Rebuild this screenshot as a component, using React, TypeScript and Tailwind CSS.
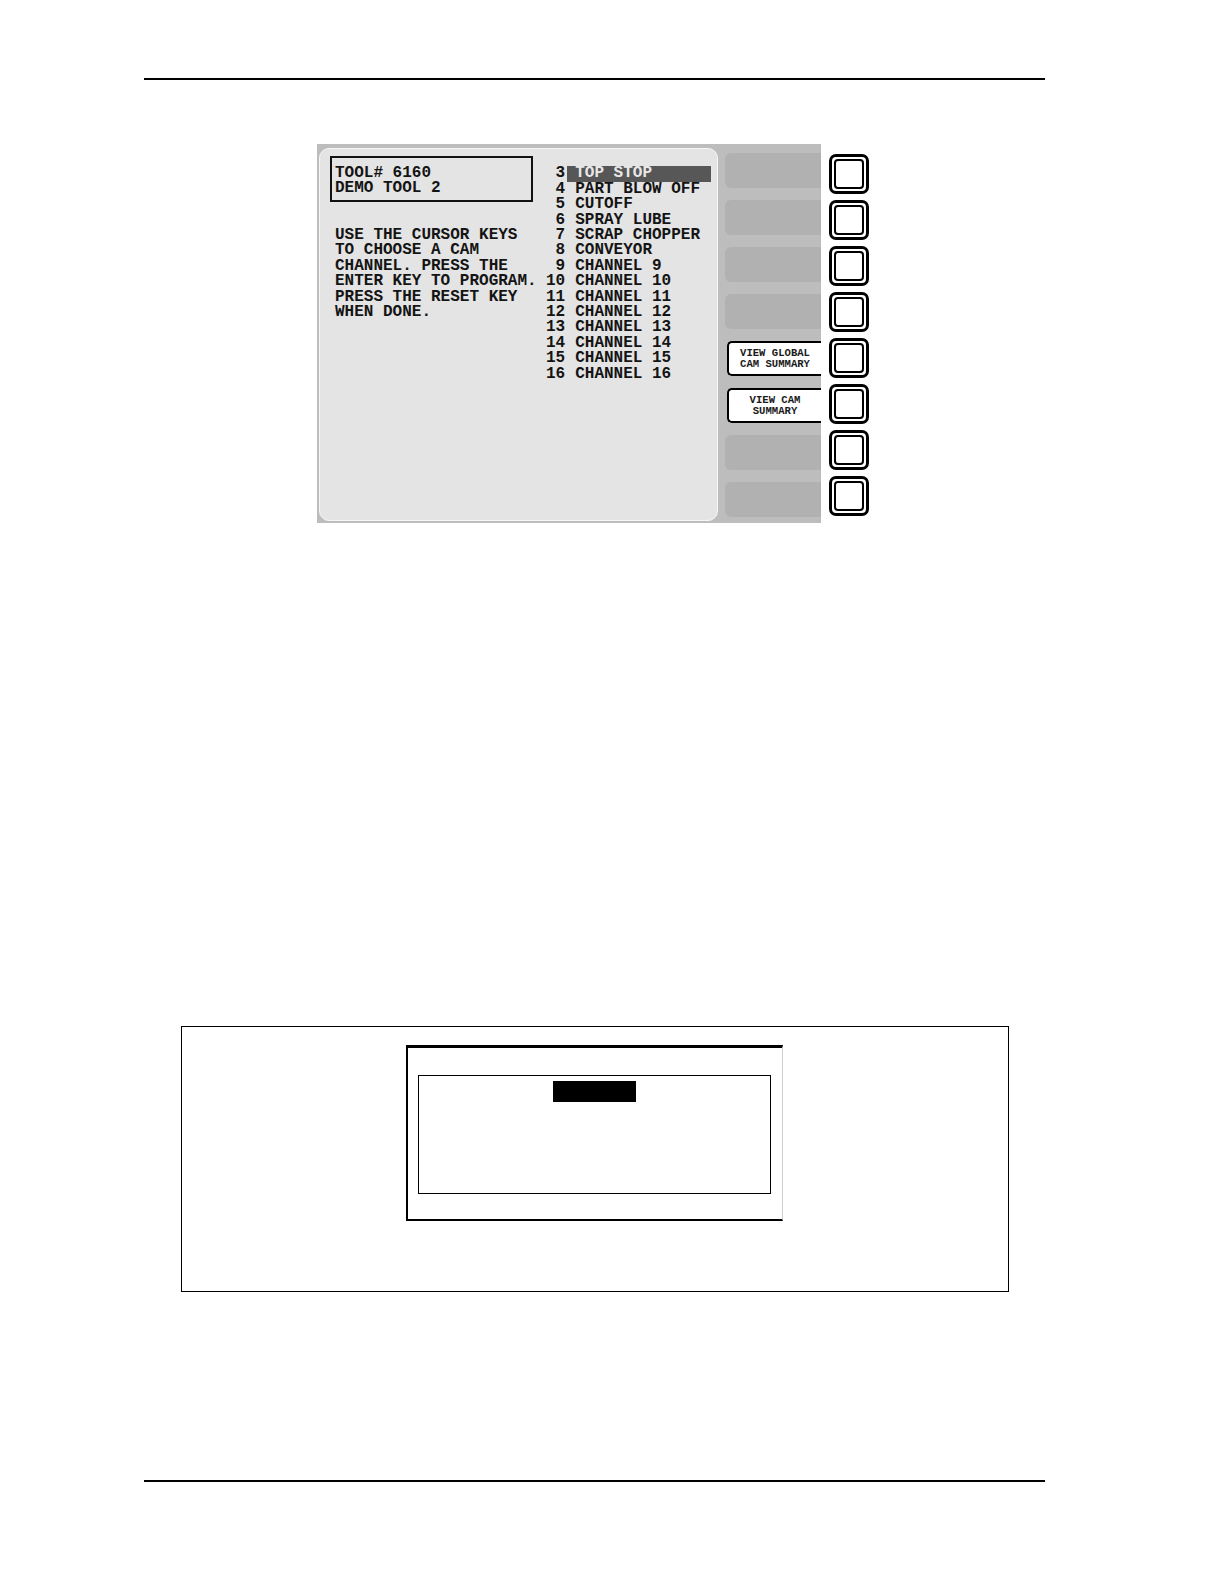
const mono = "font-['Liberation_Mono','DejaVu_Sans_Mono',monospace]";

const instructions = [
  "USE THE CURSOR KEYS",
  "TO CHOOSE A CAM",
  "CHANNEL. PRESS THE",
  "ENTER KEY TO PROGRAM.",
  "PRESS THE RESET KEY",
  "WHEN DONE.",
];

const channels = [
  { n: 3, name: "TOP STOP" },
  { n: 4, name: "PART BLOW OFF" },
  { n: 5, name: "CUTOFF" },
  { n: 6, name: "SPRAY LUBE" },
  { n: 7, name: "SCRAP CHOPPER" },
  { n: 8, name: "CONVEYOR" },
  { n: 9, name: "CHANNEL 9" },
  { n: 10, name: "CHANNEL 10" },
  { n: 11, name: "CHANNEL 11" },
  { n: 12, name: "CHANNEL 12" },
  { n: 13, name: "CHANNEL 13" },
  { n: 14, name: "CHANNEL 14" },
  { n: 15, name: "CHANNEL 15" },
  { n: 16, name: "CHANNEL 16" },
];

const softKeys: (string[] | null)[] = [
  null,
  null,
  null,
  null,
  ["VIEW GLOBAL", "CAM SUMMARY"],
  ["VIEW CAM", "SUMMARY"],
  null,
  null,
];

const SoftKey = ({ label }: { label: string[] | null }) =>
  label ? (
    <div className="h-[35px] w-[94px] ml-[2px] bg-white border-2 border-r-0 border-black rounded-l-[5px] flex flex-col items-center justify-center">
      {label.map((l) => (
        <span
          key={l}
          className={`${mono} font-bold text-[10.6px] leading-[11px] text-[#1a1a1a] whitespace-pre`}
        >
          {l}
        </span>
      ))}
    </div>
  ) : (
    <div className="h-[35px] w-[96px] bg-[#b1b1b1] rounded-l-[6px]" />
  );

const HardKey = () => (
  <div className="w-[40px] h-[40px] border-[3px] border-black rounded-[7px] p-[2px] bg-white">
    <div className="w-full h-full border-2 border-black rounded-[4px]" />
  </div>
);

const Screen = () => (
  <div className="flex">
    {/* grey display */}
    <div className="w-[504px] h-[379px] bg-[#bdbdbd] flex">
      <div className="ml-[2px] mt-[4px] w-[399px] h-[373px] bg-[#e4e4e4] rounded-[10px] border border-[#f6f6f6] pt-[7px] pl-[10px] flex text-[#141414]">
        <div className={`${mono} font-bold text-[16px] leading-[15.4px] w-[216px]`}>
          <div className="w-[203px] h-[46px] border-2 border-[#111] pl-[3px] pt-[8px]">
            <div className="whitespace-pre">TOOL# 6160</div>
            <div className="whitespace-pre">DEMO TOOL 2</div>
          </div>
          <div className="mt-[26px] pl-[5px]">
            {instructions.map((t) => (
              <div key={t} className="whitespace-pre">
                {t}
              </div>
            ))}
          </div>
        </div>
        <div className={`${mono} font-bold text-[16px] leading-[15.4px] pt-[10.3px]`}>
          {channels.map((c, i) => (
            <div key={c.n} className="flex">
              <span className="w-[19.2px] text-right">{c.n}</span>
              <span
                className={`ml-[2px] pl-[8px] w-[144px] whitespace-pre ${
                  i === 0 ? "bg-[#575757] text-[#e8e8e8]" : ""
                }`}
              >
                {c.name}
              </span>
            </div>
          ))}
        </div>
      </div>
      <div className="ml-[7px] mt-[9px] flex flex-col gap-[12px]">
        {softKeys.map((k, i) => (
          <SoftKey key={i} label={k} />
        ))}
      </div>
    </div>
    {/* hard keys */}
    <div className="ml-[8px] mt-[10px] flex flex-col gap-[6px]">
      {softKeys.map((_, i) => (
        <HardKey key={i} />
      ))}
    </div>
  </div>
);

const Figure = () => (
  <div className="ml-[181px] w-[828px] h-[266px] border border-black">
    <div className="ml-[224px] mt-[18px] w-[377px] h-[176px] border-t-[3px] border-l-2 border-b-2 border-r border-t-black border-l-black border-b-black border-r-[#cfcfcf]">
      <div className="ml-[10px] mt-[27px] w-[353px] h-[119px] border-[1.5px] border-black flex justify-center">
        <div className="mt-[5px] w-[83px] h-[21px] bg-black" />
      </div>
    </div>
  </div>
);

export default function App() {
  return (
    <div className="w-[1224px] h-[1584px] bg-white pt-[78px]">
      <div className="ml-[144px] w-[901px] h-[2px] bg-black" />
      <div className="mt-[64px] ml-[317px]">
        <Screen />
      </div>
      <div className="mt-[503px]">
        <Figure />
      </div>
      <div className="mt-[188px] ml-[144px] w-[901px] h-[2px] bg-black" />
    </div>
  );
}
